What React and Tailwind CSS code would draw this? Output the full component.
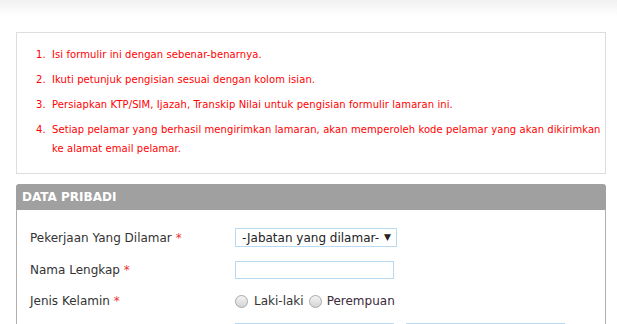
import React from "react";

const items = [
  ["Isi formulir ini dengan sebenar-benarnya."],
  ["Ikuti petunjuk pengisian sesuai dengan kolom isian."],
  ["Persiapkan KTP/SIM, Ijazah, Transkip Nilai untuk pengisian formulir lamaran ini."],
  [
    "Setiap pelamar yang berhasil mengirimkan lamaran, akan memperoleh kode pelamar yang akan dikirimkan",
    "ke alamat email pelamar.",
  ],
];

function Radio() {
  return (
    <span className="inline-block w-[13px] h-[13px] rounded-full border border-[#a8a8a8] bg-gradient-to-b from-[#f4f4f4] to-[#d4d4d4] shrink-0" />
  );
}

export default function App() {
  return (
    <div
      className="w-[617px] h-[324px] overflow-hidden bg-white"
      style={{ fontFamily: '"DejaVu Sans", Verdana, sans-serif' }}
    >
      <div className="h-[16px] bg-gradient-to-b from-[#f1f1f1] to-white" />
      <div className="mt-[16px] ml-[16px] w-[590px] border border-[#dddddd] pt-[12px] pb-[15px] pl-[19px] pr-[2px] text-[10px] tracking-[0.08px] leading-[19px] text-[#ff0000] whitespace-nowrap">
        {items.map((lines, i) => (
          <div key={i} className={`flex ${i > 0 ? "mt-[6px]" : ""}`}>
            <span className="w-[16px] shrink-0">{i + 1}.</span>
            <div className="flex flex-col">
              {lines.map((l, j) => (
                <span key={j}>{l}</span>
              ))}
            </div>
          </div>
        ))}
      </div>
      <div className="mt-[10px] ml-[16px] w-[590px]">
        <div className="h-[26px] bg-[#a0a0a0] rounded-t-[3px] px-[6px] flex items-center text-white font-bold text-[12px]">
          DATA PRIBADI
        </div>
        <div className="border-l border-r border-[#b0b0b0] pl-[13px] pt-[18px] h-[200px] text-[12px] text-[#333] whitespace-nowrap">
          <div className="flex items-center h-[19px]">
            <div className="w-[205px]">
              Pekerjaan Yang Dilamar <span className="text-[#e33]">*</span>
            </div>
            <div className="w-[162px] h-[19px] border border-[#b8d9f0] flex items-center justify-between pl-[6px] pr-[5px] text-[#222]">
              <span>-Jabatan yang dilamar-</span>
              <span className="text-[9px]">▼</span>
            </div>
          </div>
          <div className="flex items-center h-[18px] mt-[14px]">
            <div className="w-[205px]">
              Nama Lengkap <span className="text-[#e33]">*</span>
            </div>
            <div className="w-[159px] h-[18px] border border-[#b8d9f0]" />
          </div>
          <div className="flex items-center h-[18px] mt-[13px]">
            <div className="w-[205px]">
              Jenis Kelamin <span className="text-[#e33]">*</span>
            </div>
            <div className="flex items-center">
              <Radio />
              <span className="ml-[6px] text-[#333]">Laki-laki</span>
              <span className="ml-[5px] flex"><Radio /></span>
              <span className="ml-[5px] text-[#3a2a3a]">Perempuan</span>
            </div>
          </div>
          <div className="flex mt-[13px]">
            <div className="w-[205px]" />
            <div className="w-[159px] h-[18px] border border-[#b8d9f0]" />
            <div className="ml-[12px] w-[159px] h-[18px] border border-[#b8d9f0]" />
          </div>
        </div>
      </div>
    </div>
  );
}
